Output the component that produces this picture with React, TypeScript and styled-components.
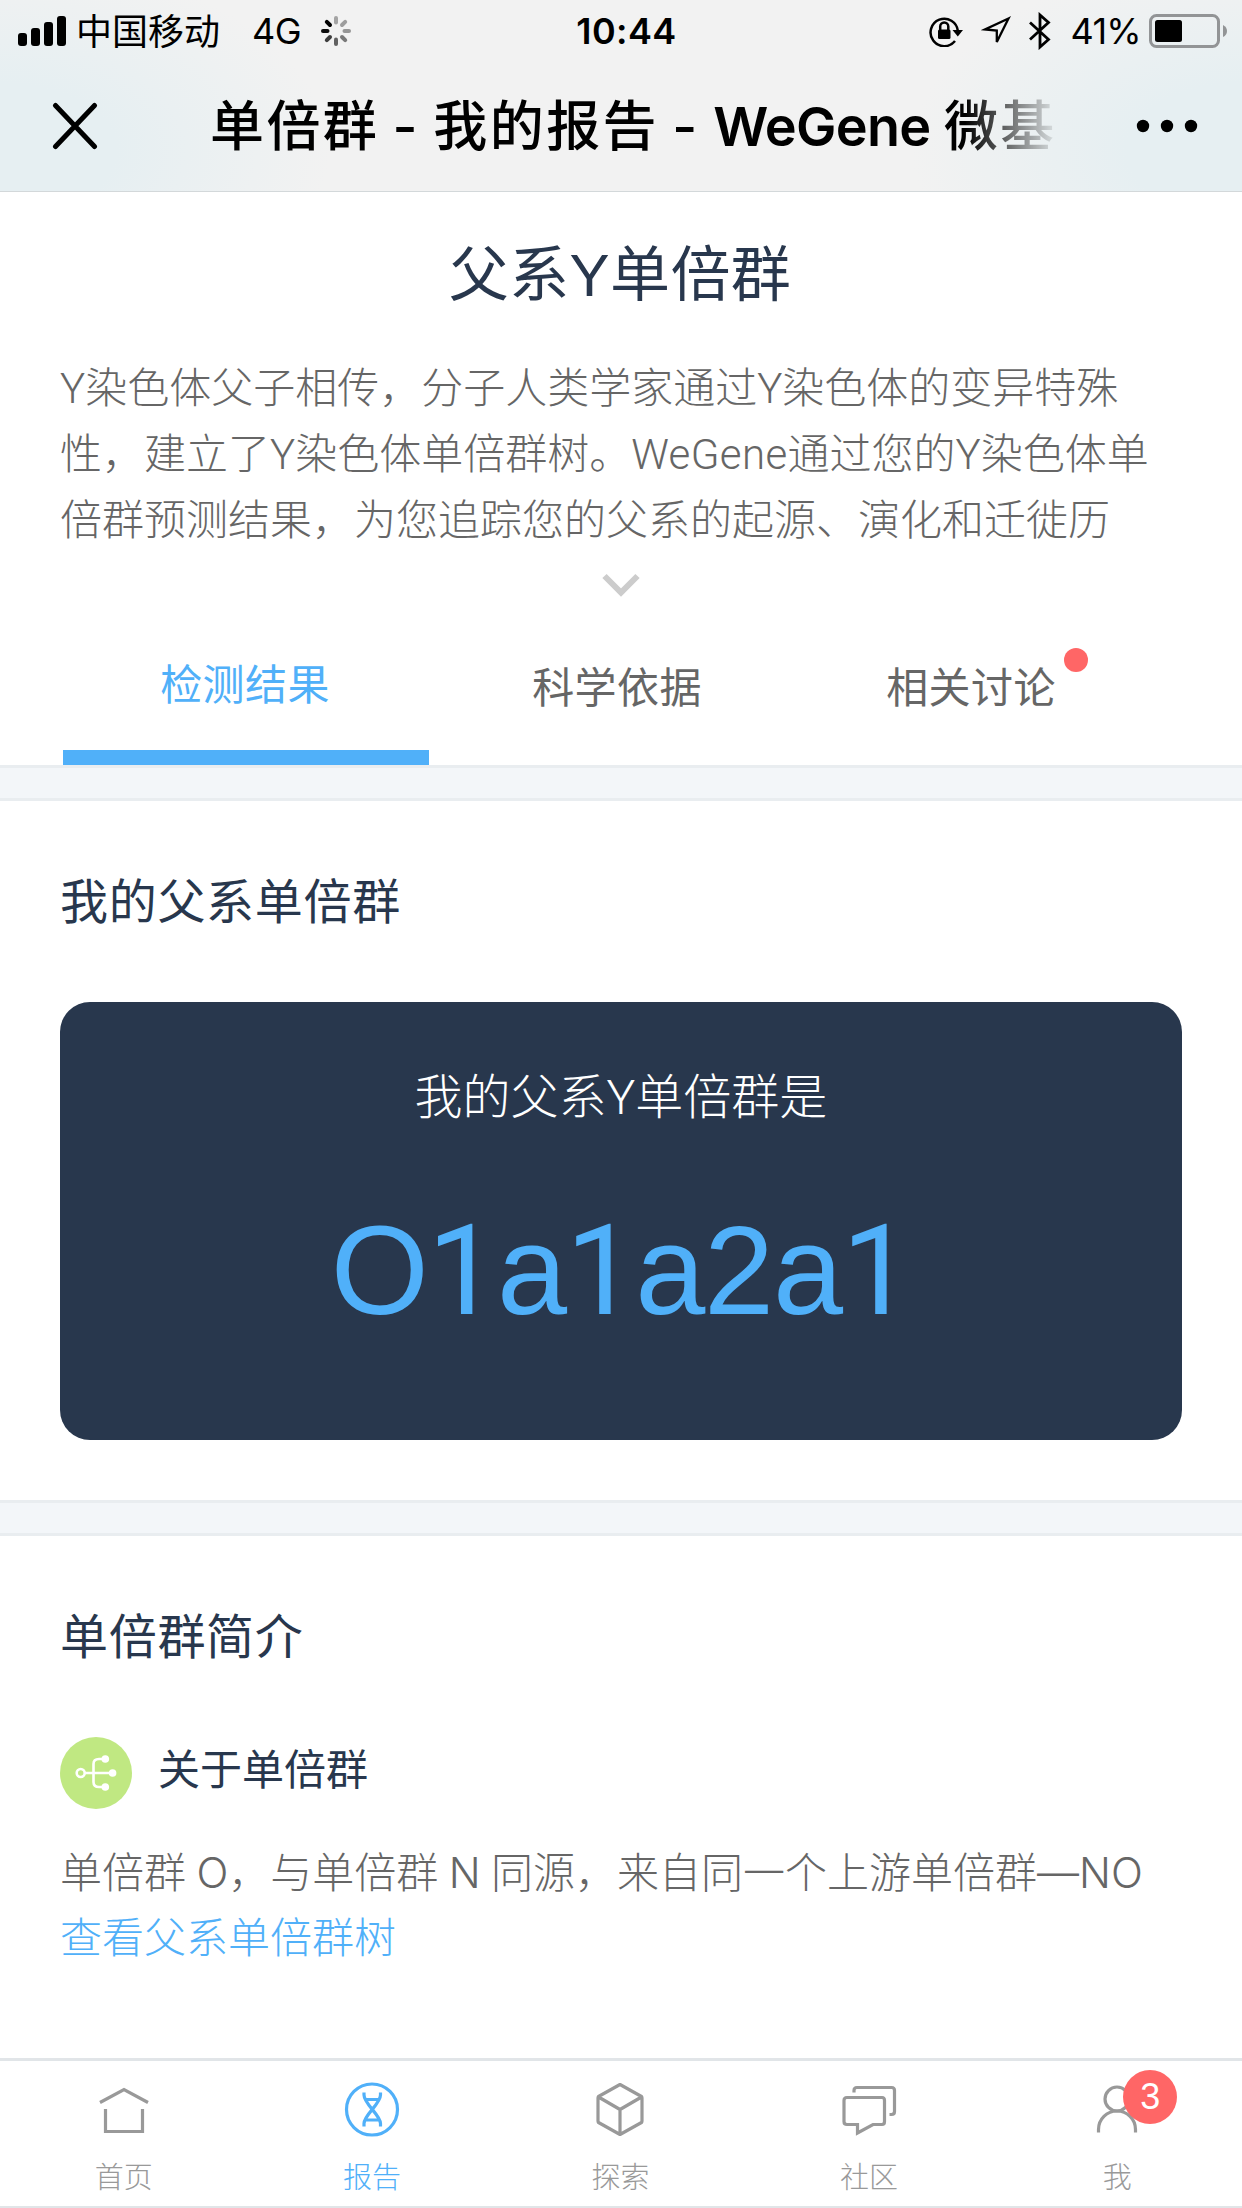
import React from 'react';
import styled, { createGlobalStyle, css } from 'styled-components';

const Global = createGlobalStyle`
  * { box-sizing: border-box; }
  body { margin: 0; background: #fff; }
  p, h1, h2, h3 { margin: 0; font-weight: 400; }
`;

const navy = '#28374d';
const blue = '#50b0f9';
const grey = '#666';
const helv = `'Liberation Sans', 'Noto Sans CJK SC', sans-serif`;
const light = `Roboto, 'Noto Sans CJK SC', sans-serif`;
const sf = `Inter, 'Noto Sans CJK SC', sans-serif`;

const Screen = styled.div`
  width: 1242px;
  height: 2208px;
  display: flex;
  flex-direction: column;
  overflow: hidden;
  background: #fff;
  font-family: ${helv};
`;

const Header = styled.header`
  height: 192px;
  flex: none;
  display: flex;
  flex-direction: column;
  border-bottom: 1px solid #d3d8da;
  background:
    radial-gradient(ellipse 330px 190px at 0 150px, #e6eff2 0 35%, #e6eff200 100%),
    radial-gradient(ellipse 330px 190px at 1242px 150px, #e6eff2 0 35%, #e6eff200 100%),
    #f2f2f2;
  color: #000;
  font-family: ${sf};
`;

const StatusBar = styled.div`
  height: 60px;
  display: grid;
  grid-template-columns: 1fr auto 1fr;
  align-items: center;
  padding: 0 15px 0 18px;
  font-size: 36px;
  line-height: 60px;
`;

const StatusSide = styled.div<{ $end?: boolean }>`
  display: flex;
  align-items: center;
  justify-content: ${p => (p.$end ? 'flex-end' : 'flex-start')};
`;

const Carrier = styled.span`
  margin: -4px 0 0 9px;
  font-family: 'Noto Sans CJK SC', sans-serif;
`;

const Network = styled.span`
  margin: 1px 20px 0 32px;
  letter-spacing: -0.5px;
`;

const Time = styled.span`
  margin: 1px 0 0 8px;
  font-weight: 600;
  letter-spacing: 0.4px;
`;

const Percent = styled.span`
  margin: 1px 8px 0 20px;
  letter-spacing: -0.7px;
`;

const Gap = styled.span<{ $w: number }>`
  width: ${p => p.$w}px;
`;

const NavBar = styled.div`
  height: 131px;
  display: flex;
  align-items: center;
  padding: 0 44px 0 52px;
`;

const NavTitle = styled.h1`
  width: 856px;
  margin: 2px 0 0 112px;
  white-space: nowrap;
  font-size: 54px;
  font-weight: 500;
  line-height: 80px;
  letter-spacing: 2.4px;
  word-spacing: -3.4px;
  mask-image: linear-gradient(to right, #000 755px, transparent 852px);
`;

const Brand = styled.span`
  font-weight: 600;
  letter-spacing: -0.7px;
`;

const Intro = styled.section`
  padding: 39px 60px 0;
`;

const PageTitle = styled.h2`
  height: 90px;
  padding-right: 2px;
  margin-bottom: 35px;
  text-align: center;
  font-size: 60px;
  line-height: 90px;
  letter-spacing: 0.4px;
  color: ${navy};
`;

const bodyText = css`
  font-size: 42px;
  font-weight: 300;
  line-height: 66px;
  white-space: nowrap;
`;

const IntroText = styled.p`
  ${bodyText}
  font-family: ${light};
  color: ${grey};
`;

const IntroBrand = styled.span`
  letter-spacing: 0.4px;
`;

const Paragraph = styled.p`
  ${bodyText}
  font-family: ${sf};
  word-spacing: -1.4px;
  color: ${grey};
`;

const ChevronRow = styled.div`
  display: flex;
  justify-content: center;
  height: 46px;
  padding-top: 19px;
`;

const Tabs = styled.nav`
  display: grid;
  grid-template-columns: 366px 376px 332px;
  height: 165px;
  padding-left: 3px;
`;

const Tab = styled.div<{ $active?: boolean }>`
  display: flex;
  justify-content: center;
  align-items: flex-start;
  padding: ${p => (p.$active ? '53px 2px 0 0' : '56px 0 0 0')};
  border-bottom: ${p => (p.$active ? `15px solid ${blue}` : 'none')};
  color: ${p => (p.$active ? blue : grey)};
  font-size: 42px;
  line-height: 66px;
  letter-spacing: 0.4px;
`;

const TabLabel = styled.span`
  position: relative;
`;

const Dot = styled.i`
  position: absolute;
  left: 178px;
  top: -8px;
  width: 24px;
  height: 24px;
  border-radius: 50%;
  background: #f66;
`;

const Band = styled.div`
  height: 36px;
  flex: none;
  border-top: 3px solid #e9edf0;
  border-bottom: 3px solid #e9edf0;
  background: #f3f6f9;
`;

const Section = styled.section`
  padding: 61px 60px 60px;
`;

const SectionTitle = styled.h3`
  height: 80px;
  font-size: 48px;
  line-height: 81px;
  letter-spacing: 0.7px;
  color: ${navy};
`;

const Card = styled.div`
  height: 438px;
  margin-top: 60px;
  padding-top: 57px;
  border-radius: 30px;
  background: ${navy};
  text-align: center;
`;

const CardLabel = styled.p`
  font-family: ${light};
  font-size: 48px;
  font-weight: 300;
  line-height: 78px;
  color: #fff;
`;

const Haplogroup = styled.p`
  margin-top: 62px;
  font-size: 126px;
  line-height: 144px;
  letter-spacing: -1.3px;
  color: ${blue};
`;

const One = styled.span`
  font-family: Roboto, sans-serif;
`;

const AboutRow = styled.div`
  display: flex;
  align-items: center;
  gap: 26px;
  height: 72px;
  margin: 60px 0 31px;
  font-size: 42px;
  color: ${navy};
`;

const AboutLabel = styled.span`
  line-height: 66px;
  padding-bottom: 4px;
`;

const Link = styled.a`
  ${bodyText}
  display: block;
  color: ${blue};
`;

const TabBar = styled.footer`
  display: grid;
  grid-template-columns: repeat(5, 1fr);
  height: 150px;
  margin-top: auto;
  border-top: 3px solid #e1e5e8;
  border-bottom: 2px solid #e1e5e8;
`;

const BarItem = styled.div<{ $active?: boolean }>`
  display: flex;
  flex-direction: column;
  align-items: center;
  padding: 18px 1px 0 0;
  color: ${p => (p.$active ? blue : '#999')};
  font-size: 29px;
  font-weight: 300;
  line-height: 40px;
`;

const IconBox = styled.div`
  position: relative;
  width: 60px;
  height: 60px;
  margin-bottom: 19px;
`;

const Badge = styled.b`
  position: absolute;
  left: 36px;
  top: -9px;
  width: 54px;
  height: 54px;
  border-radius: 50%;
  background: #f66;
  color: #fff;
  font-size: 36px;
  font-weight: 400;
  line-height: 54px;
  text-align: center;
`;

const MoreButton = styled.svg`
  margin-left: auto;
`;

const Signal = () => (
  <svg width="49" height="30" viewBox="0 0 49 30">
    {[13, 18, 24, 30].map((h, i) => (
      <rect key={h} x={i * 13} y={30 - h} width="9" height={h} rx="3" />
    ))}
  </svg>
);

const Spinner = () => (
  <svg width="30" height="30" viewBox="-15 -15 30 30">
    {[0.32, 0.35, 0.38, 0.5, 0.6, 0.75, 0.95, 1].map((o, i) => (
      <path key={i} d="M0 -13V-8.500" stroke="#000" strokeOpacity={o} strokeWidth="4" strokeLinecap="round" transform={`rotate(${i * 45})`} />
    ))}
  </svg>
);

const RotationLock = () => (
  <svg width="34" height="32" viewBox="0 0 34 32" fill="none" stroke="#000" strokeWidth="2.5">
    <path d="M26 26A13.700 13.700 0 1 1 28.900 16" />
    <path d="M23.500 15H34L28.800 21.500Z" fill="#000" stroke="none" />
    <rect x="9" y="14.500" width="12.500" height="9.500" rx="1.500" fill="#000" stroke="none" />
    <path d="M11.200 15V11.500A4 4 0 0 1 19.300 11.500V15" />
  </svg>
);

const LocationArrow = () => (
  <svg width="30" height="30" viewBox="0 0 30 30" fill="none" stroke="#000" strokeWidth="2.3">
    <path d="M27.500 2.500L4 13.500L15.800 14.500V26Z" />
  </svg>
);

const Bluetooth = () => (
  <svg width="22" height="38" viewBox="0 0 22 38" fill="none" stroke="#000" strokeWidth="2.8">
    <path d="M1 10.500L19.500 27.500L11 35V3L19.500 10.500L1 27.500" />
  </svg>
);

const Battery = () => (
  <svg width="78" height="34" viewBox="0 0 78 34">
    <rect x="1.500" y="1.500" width="68" height="31" rx="6" fill="none" stroke="#929496" strokeWidth="3" />
    <rect x="6" y="6" width="27" height="22" rx="2.500" />
    <path d="M74 11q4 2 4 6t-4 6z" fill="#929496" />
  </svg>
);

const Close = () => (
  <svg width="46" height="48" viewBox="0 0 46 48" stroke="#000" strokeWidth="5" strokeLinecap="round">
    <path d="M3.500 3.500L42.500 44.500M42.500 3.500L3.500 44.500" />
  </svg>
);

const More = () => (
  <MoreButton width="62" height="14" viewBox="0 0 62 14">
    <circle cx="7" cy="7" r="6.200" />
    <circle cx="31" cy="7" r="6.200" />
    <circle cx="55" cy="7" r="6.200" />
  </MoreButton>
);

const Chevron = () => (
  <svg width="38" height="26" viewBox="0 0 38 26" fill="none" stroke="#ccc" strokeWidth="6">
    <path d="M2.500 3L19 19.500L35.500 3" />
  </svg>
);

const TreeIcon = () => (
  <svg width="72" height="72" viewBox="0 0 72 72" fill="none" stroke="#fff" strokeWidth="2.6">
    <circle cx="36" cy="36" r="36" fill="#c0e882" stroke="none" />
    <circle cx="20.700" cy="36" r="4" />
    <path d="M25 36H52M45 22H39Q33.500 22 33.500 27V45Q33.500 50 39 50H45" />
    <g fill="#fff" stroke="none">
      <circle cx="45.300" cy="22" r="3.800" />
      <circle cx="52.600" cy="36" r="3.800" />
      <circle cx="45.300" cy="50" r="3.800" />
    </g>
  </svg>
);

const Icon = ({ children }: { children: React.ReactNode }) => (
  <svg width="60" height="60" viewBox="0 0 60 60" fill="none" stroke="currentColor" strokeWidth="3.2">
    {children}
  </svg>
);

const Home = () => (
  <Icon>
    <path d="M6 23.500L30 10.500L54 23.500M11.500 30V52.500H48.500V30" />
  </Icon>
);

const Dna = () => (
  <Icon>
    <circle cx="30" cy="30.500" r="25.500" />
    <path d="M22 13.500V16C22 25 38.500 36 38.500 44.500V47.500M38.500 13.500V16C38.500 25 22 36 22 44.500V47.500M23 20.500H37.500M23 41H37.500" />
  </Icon>
);

const Cube = () => (
  <Icon>
    <path d="M30 5.500L51.500 17.500Q52 18 52 19V42Q52 43 51.500 43.500L30 55.500L8.500 43.500Q8 43 8 42V19Q8 18 8.500 17.500ZM8.500 18L30 30.500L51.500 18M30 30.500V55.500" strokeLinejoin="round" />
  </Icon>
);

const Chat = () => (
  <Icon>
    <path d="M8 18.500H43Q45.500 18.500 45.500 21.500V42.500Q45.500 45.500 43 45.500H34L18.500 54V45.500H8Q5 45.500 5 42.500V21.500Q5 18.500 8 18.500Z" />
    <path d="M15 13.500V11.500Q15 8.500 18 8.500H52.500Q55.500 8.500 55.500 11.500V32.500Q55.500 35.500 52.500 35.500H50.500" />
  </Icon>
);

const Person = () => (
  <Icon>
    <circle cx="30" cy="20" r="12" />
    <path d="M11.500 53.500V50.500A18.500 18.500 0 0 1 48.500 50.500V53.500" />
  </Icon>
);

const items = [
  { label: '首页', icon: <Home /> },
  { label: '报告', icon: <Dna />, active: true },
  { label: '探索', icon: <Cube /> },
  { label: '社区', icon: <Chat /> },
  { label: '我', icon: <Person />, badge: 3 },
];

export default function App() {
  return (
    <Screen>
      <Global />
      <Header>
        <StatusBar>
          <StatusSide>
            <Signal />
            <Carrier>中国移动</Carrier>
            <Network>4G</Network>
            <Spinner />
          </StatusSide>
          <Time>10:44</Time>
          <StatusSide $end>
            <RotationLock />
            <Gap $w={18} />
            <LocationArrow />
            <Gap $w={18} />
            <Bluetooth />
            <Percent>41%</Percent>
            <Battery />
          </StatusSide>
        </StatusBar>
        <NavBar>
          <Close />
          <NavTitle>
            单倍群 - 我的报告 - <Brand>WeGene</Brand> 微基
          </NavTitle>
          <More />
        </NavBar>
      </Header>

      <Intro>
        <PageTitle>父系Y单倍群</PageTitle>
        <IntroText>
          Y染色体父子相传，分子人类学家通过Y染色体的变异特殊
          <br />
          性，建立了Y染色体单倍群树。<IntroBrand>WeGene</IntroBrand>通过您的Y染色体单
          <br />
          倍群预测结果，为您追踪您的父系的起源、演化和迁徙历
        </IntroText>
        <ChevronRow>
          <Chevron />
        </ChevronRow>
        <Tabs>
          <Tab $active>
            <TabLabel>检测结果</TabLabel>
          </Tab>
          <Tab>
            <TabLabel>科学依据</TabLabel>
          </Tab>
          <Tab>
            <TabLabel>
              相关讨论
              <Dot />
            </TabLabel>
          </Tab>
        </Tabs>
      </Intro>

      <Band />
      <Section>
        <SectionTitle>我的父系单倍群</SectionTitle>
        <Card>
          <CardLabel>我的父系Y单倍群是</CardLabel>
          <Haplogroup>
            O<One>1</One>a<One>1</One>a2a<One>1</One>
          </Haplogroup>
        </Card>
      </Section>

      <Band />
      <Section>
        <SectionTitle>单倍群简介</SectionTitle>
        <AboutRow>
          <TreeIcon />
          <AboutLabel>关于单倍群</AboutLabel>
        </AboutRow>
        <Paragraph>单倍群 O，与单倍群 N 同源，来自同一个上游单倍群—NO</Paragraph>
        <Link>查看父系单倍群树</Link>
      </Section>

      <TabBar>
        {items.map(item => (
          <BarItem key={item.label} $active={item.active}>
            <IconBox>
              {item.icon}
              {item.badge && <Badge>{item.badge}</Badge>}
            </IconBox>
            {item.label}
          </BarItem>
        ))}
      </TabBar>
    </Screen>
  );
}
